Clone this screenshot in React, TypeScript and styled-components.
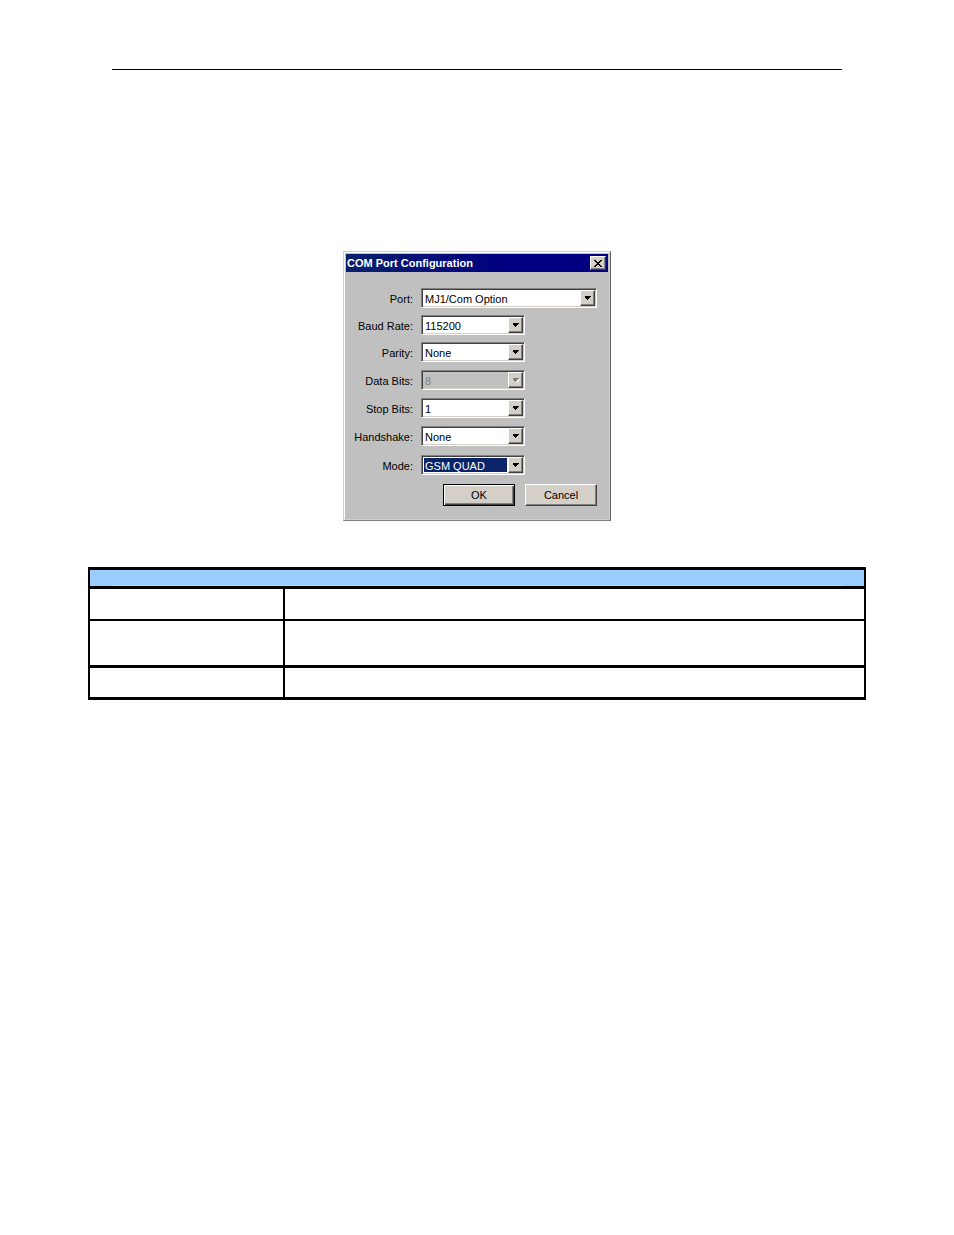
import React, { useId } from "react";
import styled, { createGlobalStyle } from "styled-components";

const GlobalStyle = createGlobalStyle`
  *, *::before, *::after { box-sizing: border-box; }
  body { margin: 0; background: #fff; color: #000; font: 11px/14px "Liberation Sans", Arial, sans-serif; }
`;

const Page = styled.main`
  display: flex;
  flex-direction: column;
  align-items: center;
  padding: 69px 88px 0;
`;

const Rule = styled.hr`
  align-self: stretch;
  margin: 0 24px 181px;
  border: 0;
  border-top: 1px solid #000;
`;

const Dialog = styled.section`
  width: 268px;
  border: 1px solid;
  border-color: #d4d0c8 #606060 #808080 #d4d0c8;
  background: #c0c0c0;
`;

const DialogInner = styled.div`
  border: 1px solid;
  border-color: #fff #d4d0c8 #d4d0c8 #fff;
  padding: 1px;
`;

const TitleBar = styled.header`
  display: flex;
  align-items: center;
  justify-content: space-between;
  height: 18px;
  padding: 0 2px 0 1px;
  background: linear-gradient(90deg, #08216b, #000080 60%);
  color: #fff;
`;

const Title = styled.h1`
  margin: 0;
  font-size: 11px;
  line-height: 14px;
`;

const CloseButton = styled.button`
  display: grid;
  place-items: center;
  width: 16px;
  height: 14px;
  padding: 0;
  border: 1px solid;
  border-color: #fff #404040 #404040 #fff;
  background: #d4d0c8;
  box-shadow: inset -1px -1px #808080;
`;

const Form = styled.form`
  padding: 16px 11px 12px 0;
`;

const Row = styled.div<{ $gap: number }>`
  display: grid;
  grid-template-columns: 67px 1fr;
  column-gap: 8px;
  align-items: center;
  margin-bottom: ${(p) => p.$gap}px;
`;

const FieldLabel = styled.label`
  padding-top: 2px;
  text-align: right;
  white-space: nowrap;
`;

const Combo = styled.div<{ $wide?: boolean; $off?: boolean }>`
  display: flex;
  position: relative;
  width: ${(p) => (p.$wide ? "176px" : "104px")};
  height: 20px;
  border: 1px solid;
  border-color: #808080 #fff #fff #808080;
  background: ${(p) => (p.$off ? "#c0c0c0" : "#fff")};
  box-shadow: inset 1px 1px #404040, inset -1px -1px #d4d0c8;
  padding: 2px;
`;

const Select = styled.select<{ $active?: boolean }>`
  appearance: none;
  flex: 1;
  min-width: 0;
  margin-right: 15px;
  padding: 1px 0 0 1px;
  border: 0;
  border-radius: 0;
  outline: 0;
  background: ${(p) => (p.$active ? "#0a246a" : "transparent")};
  color: ${(p) => (p.$active ? "#fff" : "#000")};
  font: inherit;
  opacity: 1;
  &:disabled { color: #808080; }
`;

const Arrow = styled.span`
  display: grid;
  place-items: center;
  position: absolute;
  top: 1px;
  right: 1px;
  width: 15px;
  height: 16px;
  border: 1px solid;
  border-color: #fff #404040 #404040 #fff;
  background: #d4d0c8;
  box-shadow: inset -1px -1px #808080;
  pointer-events: none;
`;

const Actions = styled.div`
  display: flex;
  justify-content: flex-end;
  gap: 10px;
`;

const PushButton = styled.button<{ $primary?: boolean }>`
  width: 72px;
  height: 22px;
  padding: 0;
  border: 1px solid;
  border-color: ${(p) => (p.$primary ? "#000" : "#fff #404040 #404040 #fff")};
  background: #d4d0c8;
  box-shadow: ${(p) =>
    p.$primary
      ? "inset 1px 1px #fff, inset -1px -1px #404040, inset -2px -2px #808080"
      : "inset -1px -1px #808080"};
  color: #000;
  font: inherit;
`;

const Table = styled.table`
  width: 100%;
  margin-top: 46px;
  border: solid #000;
  border-width: 3px 2px 0;
  border-spacing: 0;
  table-layout: fixed;
`;

const NameColumn = styled.col`
  width: 193px;
`;

const HeadCell = styled.th`
  height: 19px;
  padding: 0 22px;
  border-bottom: 3px solid #000;
  background: #99ccff;
  vertical-align: bottom;
`;

const HeadLine = styled.div`
  height: 1px;
  background: #bbd9f8;
`;

const Cell = styled.td<{ $height: number; $line: number }>`
  height: ${(p) => p.$height}px;
  padding: 0;
  border-bottom: ${(p) => p.$line}px solid #000;
  & + & { border-left: 2px solid #000; }
`;

type FieldProps = {
  label: string;
  value: string;
  gap: number;
  wide?: boolean;
  off?: boolean;
  active?: boolean;
};

const fields: FieldProps[] = [
  { label: "Port:", value: "MJ1/Com Option", gap: 7, wide: true },
  { label: "Baud Rate:", value: "115200", gap: 7 },
  { label: "Parity:", value: "None", gap: 8 },
  { label: "Data Bits:", value: "8", gap: 8, off: true },
  { label: "Stop Bits:", value: "1", gap: 8 },
  { label: "Handshake:", value: "None", gap: 9 },
  { label: "Mode:", value: "GSM QUAD", gap: 9, active: true },
];

const rows = [
  { height: 32, line: 2 },
  { height: 47, line: 3 },
  { height: 32, line: 3 },
];

function Field({ label, value, gap, wide, off, active }: FieldProps) {
  const id = useId();
  return (
    <Row $gap={gap}>
      <FieldLabel htmlFor={id}>{label}</FieldLabel>
      <Combo $wide={wide} $off={off}>
        <Select id={id} disabled={off} $active={active}>
          <option>{value}</option>
        </Select>
        <Arrow>
          <svg width="8" height="5" viewBox="0 0 8 5" shapeRendering="crispEdges">
            {off && <path d="M2 1h6v1h-1v1h-1v1h-1v1h-1v-1h-1v-1h-1z" fill="#fff" />}
            <path d="M1 0h6v1h-1v1h-1v1h-1v1h-1v-1h-1v-1h-1z" fill={off ? "#808080" : "#000"} />
          </svg>
        </Arrow>
      </Combo>
    </Row>
  );
}

export default function App() {
  return (
    <Page>
      <GlobalStyle />
      <Rule />
      <Dialog aria-labelledby="dialog-title">
        <DialogInner>
          <TitleBar>
            <Title id="dialog-title">COM Port Configuration</Title>
            <CloseButton type="button" aria-label="Close">
              <svg width="8" height="7" viewBox="0 0 8 7" shapeRendering="crispEdges">
                <path d="M0 0h2v1h1v1h2v-1h1v-1h2v1h-1v1h-1v1h-1v1h1v1h1v1h1v1h-2v-1h-1v-1h-2v1h-1v1h-2v-1h1v-1h1v-1h1v-1h-1v-1h-1v-1h-1z" fill="#000" />
              </svg>
            </CloseButton>
          </TitleBar>
          <Form onSubmit={(e) => e.preventDefault()}>
            {fields.map((f) => (
              <Field key={f.label} {...f} />
            ))}
            <Actions>
              <PushButton type="submit" $primary>OK</PushButton>
              <PushButton type="button">Cancel</PushButton>
            </Actions>
          </Form>
        </DialogInner>
      </Dialog>
      <Table>
        <colgroup>
          <NameColumn />
          <col />
        </colgroup>
        <thead>
          <tr>
            <HeadCell colSpan={2}><HeadLine /></HeadCell>
          </tr>
        </thead>
        <tbody>
          {rows.map((r, i) => (
            <tr key={i}>
              <Cell $height={r.height} $line={r.line} />
              <Cell $height={r.height} $line={r.line} />
            </tr>
          ))}
        </tbody>
      </Table>
    </Page>
  );
}
